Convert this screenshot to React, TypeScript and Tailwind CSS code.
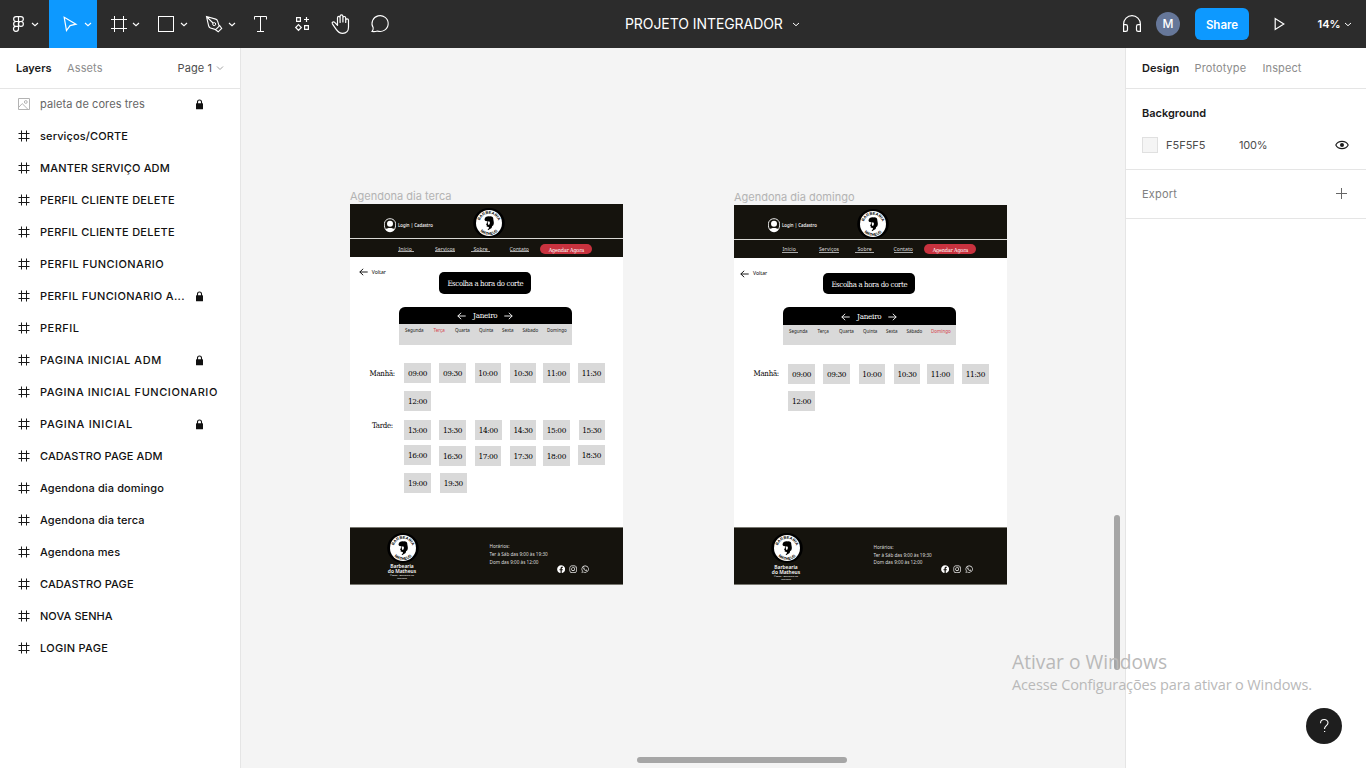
import type { ReactNode } from 'react';
import { FaFacebook, FaInstagram, FaWhatsapp } from 'react-icons/fa';

type Layer = { name: string; locked?: boolean; image?: boolean; tracking?: string };

const layers: Layer[] = [
  { name: 'paleta de cores tres', locked: true, image: true, tracking: 'tracking-[0.08px]' },
  { name: 'serviços/CORTE', tracking: 'tracking-[0.12px]' },
  { name: 'MANTER SERVIÇO ADM', tracking: 'tracking-[0.18px]' },
  { name: 'PERFIL CLIENTE DELETE', tracking: 'tracking-[0.25px]' },
  { name: 'PERFIL CLIENTE DELETE', tracking: 'tracking-[0.25px]' },
  { name: 'PERFIL FUNCIONARIO', tracking: 'tracking-[0.42px]' },
  { name: 'PERFIL FUNCIONARIO A...', locked: true, tracking: 'tracking-[0.33px]' },
  { name: 'PERFIL', tracking: 'tracking-[0.5px]' },
  { name: 'PAGINA INICIAL ADM', locked: true, tracking: 'tracking-[0.54px]' },
  { name: 'PAGINA INICIAL FUNCIONARIO', tracking: 'tracking-[0.56px]' },
  { name: 'PAGINA INICIAL', locked: true, tracking: 'tracking-[0.68px]' },
  { name: 'CADASTRO PAGE ADM', tracking: 'tracking-[0.1px]' },
  { name: 'Agendona dia domingo', tracking: 'tracking-[0.12px]' },
  { name: 'Agendona dia terca', tracking: 'tracking-[0.12px]' },
  { name: 'Agendona mes', tracking: 'tracking-[0.1px]' },
  { name: 'CADASTRO PAGE', tracking: 'tracking-[0.12px]' },
  { name: 'NOVA SENHA' },
  { name: 'LOGIN PAGE', tracking: 'tracking-[0.28px]' },
];

const days = [
  { name: 'Segunda', x: 55 },
  { name: 'Terça', x: 83.5 },
  { name: 'Quarta', x: 105 },
  { name: 'Quinta', x: 129 },
  { name: 'Sexta', x: 152 },
  { name: 'Sábado', x: 172.5 },
  { name: 'Domingo', x: 197 },
];

const links = [
  { name: 'Início', x: 48.5, line: 48, w: 15.5 },
  { name: 'Serviços', x: 85, line: 85, w: 20 },
  { name: 'Sobre', x: 123.5, line: 121, w: 19 },
  { name: 'Contato', x: 159.5, line: 159.5, w: 19.5 },
];

type Slot = { t: string; x: number; y: number };
const morning: Slot[] = [
  { t: '09:00', x: 54.3, y: 158.8 },
  { t: '09:30', x: 89.3, y: 158.8 },
  { t: '10:00', x: 124.6, y: 158.8 },
  { t: '10:30', x: 159.8, y: 158.8 },
  { t: '11:00', x: 193.1, y: 158.8 },
  { t: '11:30', x: 228.1, y: 158.8 },
  { t: '12:00', x: 54.3, y: 186.7 },
];
const afternoon: Slot[] = [
  { t: '13:00', x: 54.3, y: 216 },
  { t: '13:30', x: 89.3, y: 216 },
  { t: '14:00', x: 125, y: 216 },
  { t: '14:30', x: 159.8, y: 216 },
  { t: '15:00', x: 193.1, y: 216 },
  { t: '15:30', x: 228.5, y: 216 },
  { t: '16:00', x: 54.3, y: 240.7 },
  { t: '16:30', x: 89.3, y: 241.3 },
  { t: '17:00', x: 124.8, y: 241.3 },
  { t: '17:30', x: 159.8, y: 241.3 },
  { t: '18:00', x: 193.1, y: 241.3 },
  { t: '18:30', x: 228.1, y: 240.7 },
  { t: '19:00', x: 54.3, y: 268.5 },
  { t: '19:30', x: 90, y: 268.5 },
];

function Tool({ x, w, chevron, active, children }: { x: number; w: number; chevron?: number; active?: boolean; children: ReactNode }) {
  return (
    <button className={active ? 'h-12 bg-[#0d99ff]' : 'h-12'}>
      <svg width={w} height={48} viewBox={`${x} 0 ${w} 48`} fill="none" stroke="#fff" strokeWidth={1} className="block">
        {children}
        {chevron && <path d={`M${chevron - 3} 23l3 2.7 3-2.7`} strokeWidth={1.1} />}
      </svg>
    </button>
  );
}

function Toolbar() {
  return (
    <header className="grid h-12 shrink-0 grid-cols-[400px_1fr_266px] bg-[#2c2c2c] text-white">
      <div className="flex">
        <Tool x={0} w={49} chevron={35}>
          <path strokeWidth={1.2} d="M18.5 16.6h-2.4a2.45 2.45 0 0 0 0 4.9h2.4zM18.5 16.6h2.4a2.45 2.45 0 0 1 0 4.9h-2.4zM18.5 21.5h-2.4a2.45 2.45 0 0 0 0 4.9h2.4zM18.5 26.4h-2.4a2.5 2.5 0 1 0 2.4 2.6z" />
          <circle cx={20.9} cy={23.95} r={2.45} strokeWidth={1.2} />
        </Tool>
        <Tool x={49} w={48} chevron={88} active>
          <path strokeWidth={1.2} d="M64.2 17.3l11.8 6.9-5.9 1.4-3.6 5z" />
        </Tool>
        <Tool x={97} w={48} chevron={136}>
          <path d="M114.5 16v16M123.5 16v16M111 19.5h16M111 28.5h16" />
        </Tool>
        <Tool x={145} w={48} chevron={184}>
          <rect x={158.5} y={16.5} width={15} height={15} />
        </Tool>
        <Tool x={193} w={48} chevron={232}>
          <path strokeWidth={1.1} d="M206.5 16.5l9.2 2.6q1.4.4 1.8 1.8l1.7 5.2-3.5 3.5-5.2-1.7q-1.4-.5-1.8-1.9zM206.8 16.8l6.2 6.2M219.5 25.3l2.2 3.1-3.5 3.4-3-2.3" />
          <circle cx={214.2} cy={24.1} r={1.5} />
        </Tool>
        <Tool x={241} w={39}>
          <path d="M254.5 19.5v-3h12v3M260.5 16.5v15M257 31.5h7" />
        </Tool>
        <Tool x={280} w={40}>
          <path strokeWidth={1.2} d="M296.6 17.6h3.8v3.8h-3.8zM304.6 25.6h3.8v3.8h-3.8zM306.5 17v5M304 19.5h5M298.5 24.7l2.8 2.8-2.8 2.8-2.8-2.8z" />
        </Tool>
        <Tool x={320} w={40}>
          <path strokeWidth={1.2} strokeLinejoin="round" strokeLinecap="round" d="M337.5 24.5v-6.6c0-2 2.6-2 2.6 0v4.6M340.1 22v-5.7c0-2 2.8-2 2.8 0V22M342.9 18c0-2 2.8-2 2.8 0v4.5M345.7 20.3c0-1.9 2.8-1.9 2.8 0v7c0 3.2-2 6-5.8 6-3.5 0-4.9-1.5-6.5-3.9l-3.8-5.6c-.9-1.6 1.1-2.7 2.3-1.4l2.8 3v-7.6" />
        </Tool>
        <Tool x={360} w={40}>
          <path strokeWidth={1.1} d="M372 31.5c.9-1.2 1.4-2.4 1.2-3.8a8.1 7.9 0 1 1 4.2 3.3c-1.7.6-3.6.7-5.4.5z" />
        </Tool>
      </div>
      <div className="flex items-center pl-[225px]">
        <span className="w-[158px] text-sm tracking-[-0.07px] whitespace-nowrap">PROJETO INTEGRADOR</span>
        <svg width={8} height={8} viewBox="0 0 8 8" fill="none" stroke="#fff" className="ml-[9px]">
          <path d="M1 3l3 2.7L7 3" />
        </svg>
      </div>
      <div className="flex items-center">
        <svg width={56} height={48} viewBox="1100 0 56 48" fill="none" stroke="#fff" strokeWidth={1.2}>
          <path d="M1123.6 31v-7a8.4 8.4 0 0 1 16.8 0v7M1123.6 31.4v-6.8h2.2c1.2 0 1.7.6 1.7 1.8v3.3c0 1.2-.5 1.7-1.7 1.7zM1140.4 31.4v-6.8h-2.2c-1.2 0-1.7.6-1.7 1.8v3.3c0 1.2.5 1.7 1.7 1.7z" />
        </svg>
        <span className="flex size-6 items-center justify-center rounded-full bg-[#667799] text-[12px] font-medium">M</span>
        <button className="ml-[15px] h-8 w-[54px] rounded-md bg-[#0d99ff] pt-px text-[11.5px] leading-[18px] font-semibold">Share</button>
        <svg width={30} height={48} viewBox="1264 0 30 48" fill="none" stroke="#fff" strokeWidth={1.2} className="ml-[15px]">
          <path d="M1275.2 18.6v10.8l8.6-5.4z" />
        </svg>
        <span className="ml-[23.5px] w-[22.5px] text-[11px] font-semibold whitespace-nowrap">14%</span>
        <svg width={8} height={8} viewBox="0 0 8 8" fill="none" stroke="#fff" className="ml-[4px]">
          <path d="M1 3l3 2.7L7 3" />
        </svg>
      </div>
    </header>
  );
}

function LayersPanel() {
  return (
    <aside className="flex w-[241px] shrink-0 flex-col border-r border-[#e5e5e5] bg-white">
      <div className="flex h-[41px] shrink-0 items-center border-b border-[#e5e5e5] pl-4 text-[11px] tracking-[0.055px]">
        <span className="w-[51px] font-semibold tracking-normal text-[#1a1a1a]">Layers</span>
        <span className="w-[110.5px] tracking-[0.12px] text-[#8c8c8c]">Assets</span>
        <span className="w-[35px] tracking-[0.1px] whitespace-nowrap text-[#4d4d4d]">Page 1</span>
        <svg width={8} height={8} viewBox="0 0 8 8" fill="none" stroke="#a3a3a3" className="ml-[3.5px]">
          <path d="M1 2.5l3 3 3-3" />
        </svg>
      </div>
      <ul className="-mt-px">
        {layers.map((layer, i) => (
          <li key={i} className="flex h-8 items-center pl-[18px] text-[11px] tracking-[0.055px]">
            {layer.image ? (
              <svg width={12} height={12} viewBox="0 0 12 12" fill="none" stroke="#b3b3b3">
                <path d="M.5.5h11v11H.5zM1 9l3.2-3.4L10 11.4" />
                <circle cx={7.8} cy={4} r={1.4} />
              </svg>
            ) : (
              <svg width={12} height={12} viewBox="0 0 12 12" fill="none" stroke="#1a1a1a">
                <path d="M3.5.5v11M8.5.5v11M.5 3.5h11M.5 8.5h11" />
              </svg>
            )}
            <span
              className={`ml-[10px] whitespace-nowrap ${layer.locked ? 'w-[145px]' : 'w-[185px]'} ${layer.image ? 'text-[#666]' : 'font-medium text-[#111]'} ${layer.tracking ?? ''}`}
            >
              {layer.name}
            </span>
            {layer.locked && (
              <svg width={9} height={11} viewBox="0 0 9 11" className="ml-[10px]">
                <path d="M2.5 5V3a2 2 0 0 1 4 0v2" fill="none" stroke="#111" strokeWidth={1.1} />
                <rect x={1} y={4.3} width={7} height={5.9} rx={0.5} fill="#111" />
              </svg>
            )}
          </li>
        ))}
      </ul>
    </aside>
  );
}

function DesignPanel() {
  return (
    <aside className="flex w-[241px] shrink-0 flex-col border-l border-[#e5e5e5] bg-white text-[11px] tracking-[0.055px]">
      <div className="flex h-[41px] shrink-0 items-center border-b border-[#e5e5e5] pl-4">
        <span className="w-[52.5px] font-semibold text-[#1a1a1a]">Design</span>
        <span className="w-[68px] tracking-[0.1px] text-[#8c8c8c]">Prototype</span>
        <span className="tracking-[0.1px] text-[#8c8c8c]">Inspect</span>
      </div>
      <section className="h-[81px] border-b border-[#e5e5e5] px-4 pt-2">
        <h2 className="h-8 leading-8 font-semibold tracking-normal text-[#1a1a1a]">Background</h2>
        <div className="flex h-8 items-center text-[#4d4d4d]">
          <span className="size-4 border border-[#e0e0e0] bg-[#f5f5f5]" />
          <span className="ml-2 w-[73px] tracking-normal">F5F5F5</span>
          <span className="tracking-[-0.2px]">100%</span>
          <svg width={14} height={10} viewBox="0 0 14 10" fill="none" stroke="#1a1a1a" strokeWidth={1.1} className="mr-px ml-auto">
            <path d="M.8 5C3.2.2 10.8.2 13.2 5 10.8 9.8 3.2 9.8.8 5z" />
            <circle cx={7} cy={5} r={2} fill="#1a1a1a" stroke="none" />
          </svg>
        </div>
      </section>
      <section className="flex h-[49px] items-center justify-between border-b border-[#e5e5e5] pr-[18px] pl-4 text-[#808080]">
        <span className="tracking-[0.2px]">Export</span>
        <svg width={12} height={12} viewBox="0 0 12 12" stroke="#666">
          <path d="M5.5 0v11M0 5.5h11" />
        </svg>
      </section>
    </aside>
  );
}

function Logo({ id }: { id: string }) {
  return (
    <svg width={32} height={30} viewBox="0 0 32 30" className="block">
      <defs>
        <path id={`${id}-top`} d="M6.5 15.2a9.5 9.3 0 0 1 19 0" />
        <path id={`${id}-bottom`} d="M4 15a12 12 0 0 0 24 0" />
      </defs>
      <ellipse cx={16} cy={15} rx={15.8} ry={14.9} fill="#000" />
      <circle cx={16} cy={15} r={13} fill="#fff" />
      <g fill="#000" className="font-['Liberation_Sans'] text-[4px] font-bold">
        <text textAnchor="middle">
          <textPath href={`#${id}-top`} startOffset="50%">BARBEARIA</textPath>
        </text>
        <text textAnchor="middle">
          <textPath href={`#${id}-bottom`} startOffset="50%">MATHEUS</textPath>
        </text>
      </g>
      <path d="M11.5 11.6c.4-2.300 2.300-3.500 4.700-3.200 2.600-.4 4.400.8 4.100 2.900l.4 2.200c.4 2.100 0 4-1.500 4.600l-.6 1.900-3.600 2.200c-.6-.4 0-1.200 1.100-2.100l-.5-1.100-2-.4.300-1.100-.8-.8.800-1.600.1-2c-1.200.4-2.200-.3-2.500-1.500z" />
      <path d="M14.500 13.300l2.400.4-.2 2.500-1.500.7z" fill="#fff" />
    </svg>
  );
}

/** Positions a node at its own coordinates inside an artboard. */
function Node({ x, y, className = '', children }: { x: number; y: number; className?: string; children?: ReactNode }) {
  return (
    <div className={`absolute whitespace-nowrap ${className}`} style={{ left: x, top: y }}>
      {children}
    </div>
  );
}

function Arrow({ color, flip }: { color: string; flip?: boolean }) {
  return (
    <svg width={9} height={8} viewBox="0 0 9 8" fill="none" stroke={color} strokeWidth={0.9} className={flip ? 'block -scale-x-100' : 'block'}>
      <path d="M8.7 4H.8M4.2.8L.8 4l3.4 3.2" />
    </svg>
  );
}

function Artboard({ id, title, x, y, day, slots, full }: { id: string; title: string; x: number; y: number; day: string; slots: Slot[]; full?: boolean }) {
  return (
    <div className="absolute flex flex-col" style={{ left: x, top: y }}>
      <span className="h-[15px] text-[11px] leading-[14px] text-[#b3b3b3]">{title}</span>
      <div className="relative flex h-[380.2px] w-[273.4px] flex-col justify-between bg-white font-['Noto_Sans']">
        <div className="h-[53px] bg-[#15130d]">
          <div className="h-[35px] border-b border-[#d8d8d4]" />
        </div>
        <div className="h-[57.8px] border-y border-[#77766f] bg-[#15130d]" />

        <Node x={34} y={13.5}>
          <svg width={12} height={15} viewBox="0 0 12 15">
            <path d="M1.5 11.5C-1.5 5 1.5.7 6 .7S13.5 5 10.5 11.5" fill="none" stroke="#fff" strokeWidth={0.9} />
            <circle cx={6} cy={5.7} r={3} fill="#fff" />
            <path d="M1.3 11.5C3 9.5 9 9.5 10.7 11.5 8.5 15 3.5 15 1.3 11.5z" fill="#fff" />
          </svg>
        </Node>
        <Node x={48} y={16.3} className="text-[4.35px] leading-[8px] font-medium text-white">Login | Cadastro</Node>
        <Node x={122.8} y={3.8}><Logo id={`${id}-head`} /></Node>
        {links.map((l) => (
          <Node key={l.name} x={l.x} y={40.3} className="text-[5.2px] leading-[8px] text-[#ddd]">{l.name}</Node>
        ))}
        {links.map((l) => (
          <div key={l.name} className="absolute top-[47px] h-px bg-[#aaa]" style={{ left: l.line, width: l.w }} />
        ))}
        <Node x={190.4} y={39.3} className="h-[10px] w-[52px] rounded-full bg-[#c8323e] text-center font-['DejaVu_Serif_Condensed','DejaVu_Serif'] text-[5.5px] leading-[12.4px] tracking-[-0.2px] text-white">Agendar Agora</Node>

        <Node x={full ? 9 : 6.2} y={full ? 64 : 65}><Arrow color="#000" /></Node>
        <Node x={full ? 21.7 : 19} y={full ? 63.6 : 64.6} className="text-[5.1px] leading-[8px] text-black">Voltar</Node>
        <Node x={89.3} y={68} className="h-[21.5px] w-[92px] rounded-[5px] bg-black text-center font-['DejaVu_Serif_Condensed','DejaVu_Serif'] text-[7.7px] leading-[23px] tracking-[-0.32px] text-white">Escolha a hora do corte</Node>

        <Node x={49} y={102.6} className="h-[38px] w-[172.5px] overflow-hidden rounded-t-[6px] bg-[#d9d9d9]">
          <div className="flex h-[17.4px] items-center justify-center gap-[7px] bg-black pt-[1.6px] font-['DejaVu_Serif_Condensed','DejaVu_Serif'] text-[8px] leading-[12px] tracking-[-0.25px] text-white">
            <Arrow color="#fff" />
            <span>Janeiro</span>
            <Arrow color="#fff" flip />
          </div>
        </Node>
        {days.map((d) => (
          <Node key={d.name} x={d.x} y={122} className={d.name === day ? 'text-[4.5px] leading-[8px] text-[#d6404a]' : 'text-[4.5px] leading-[8px] text-[#222]'}>{d.name}</Node>
        ))}

        <Node x={19.5} y={164.5} className="font-['DejaVu_Serif_Condensed','DejaVu_Serif'] text-[7.8px] leading-[10px] tracking-[-0.25px] text-black">Manhã:</Node>
        {full && <Node x={22} y={217} className="font-['DejaVu_Serif_Condensed','DejaVu_Serif'] text-[7.8px] leading-[10px] tracking-[-0.3px] text-black">Tarde:</Node>}
        {slots.map((s) => (
          <Node key={s.t} x={s.x} y={s.y} className="h-[20px] w-[26.5px] bg-[#d9d9d9] text-center font-['DejaVu_Serif_Condensed','DejaVu_Serif'] text-[8.2px] leading-[21.4px] tracking-[-0.4px] text-black">{s.t}</Node>
        ))}

        <Node x={36.7} y={328.5}><Logo id={`${id}-foot`} /></Node>
        <Node x={32} y={359.8} className="w-[40px] text-center text-white">
          <p className="text-[4.9px] leading-[5px] font-semibold">Barbearia</p>
          <p className="text-[4.9px] leading-[5px] font-semibold">do Matheus</p>
          <p className="text-[2.4px] leading-[3px]">©2023 - Barbearia do</p>
          <p className="text-[2.4px] leading-[3px]">Matheus</p>
        </Node>
        <Node x={139.5} y={339} className="text-[4.65px] leading-[7.7px] text-[#ddd]">
          <p>Horários:</p>
          <p>Ter à Sáb das 9:00 às 19:30</p>
          <p>Dom das 9:00 às 12:00</p>
        </Node>
        <Node x={206.8} y={360.6} className="flex gap-[3.8px] text-white">
          <FaFacebook size={8.3} />
          <FaInstagram size={8.3} />
          <FaWhatsapp size={8.3} />
        </Node>
      </div>
    </div>
  );
}

export default function App() {
  return (
    <div className="relative flex h-[768px] w-[1366px] flex-col overflow-hidden bg-[#f5f5f5] font-['Inter',sans-serif]">
      <Toolbar />
      <div className="flex min-h-0 flex-1">
        <LayersPanel />
        <main className="relative min-w-0 flex-1 overflow-hidden bg-[#f4f4f4]">
          <Artboard id="terca" title="Agendona dia terca" x={109} y={141.4} day="Terça" slots={[...morning, ...afternoon]} full />
          <Artboard id="domingo" title="Agendona dia domingo" x={493} y={141.8} day="Domingo" slots={morning} />
          <div className="absolute top-[467px] right-[5px] h-[155px] w-[6px] rounded-full bg-[#a6a6a6]" />
          <div className="absolute bottom-[5px] left-[396px] h-[6px] w-[210px] rounded-full bg-[#a6a6a6]" />
        </main>
        <DesignPanel />
      </div>
      <div className="absolute top-[650px] left-[1012px] font-['Open_Sans'] whitespace-nowrap text-[#b9b9b9]">
        <p className="mb-[2px] text-[19.2px] leading-[23px]">Ativar o Windows</p>
        <p className="text-[14.5px] leading-[20px] tracking-[-0.12px]">Acesse Configurações para ativar o Windows.</p>
      </div>
      <button className="absolute top-[708px] left-[1306px] flex size-9 items-center justify-center rounded-full bg-[#1e1e1e]">
        <svg width={12} height={16} viewBox="0 0 12 16" fill="none" stroke="#fff" strokeWidth={1.1}>
          <path d="M2.5 5.2c0-5 7.5-4.6 7.5-.5C10 7.8 6.5 7.6 6.5 11" />
          <path d="M6 13.5h1.2" strokeWidth={1.2} />
        </svg>
      </button>
    </div>
  );
}
